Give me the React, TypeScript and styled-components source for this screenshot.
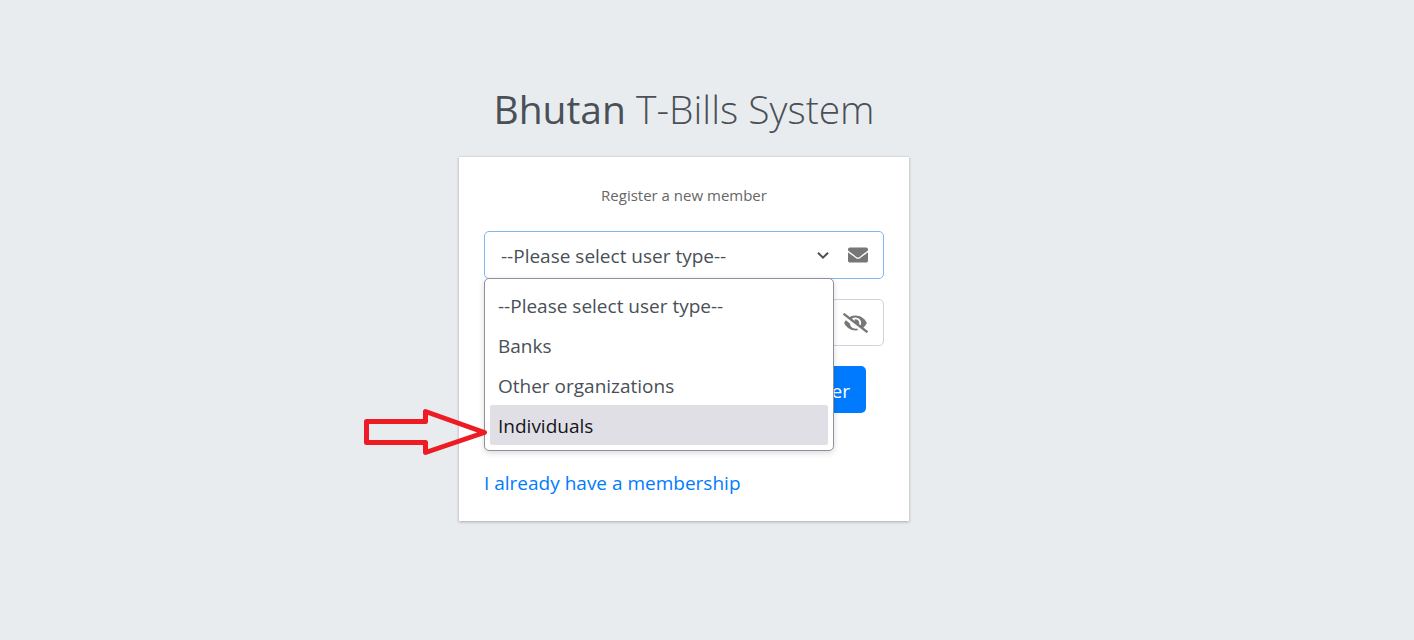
import React from "react";
import styled, { createGlobalStyle } from "styled-components";
import { FaEnvelope, FaEyeSlash } from "react-icons/fa";

const GlobalStyle = createGlobalStyle`
  *, *::before, *::after { box-sizing: border-box; }
  body {
    margin: 0;
    background: #e9ecef;
    color: #495057;
    font-family: "Open Sans", "Noto Sans", sans-serif;
    font-size: 19px;
    line-height: 30px;
  }
`;

const Page = styled.main`
  min-height: 100vh;
  padding: 77px 46px 40px 0;
  display: flex;
  flex-direction: column;
  align-items: center;
`;

const Title = styled.h1`
  margin: 0 0 17px;
  font-size: 39px;
  line-height: 63px;
  font-weight: 300;
  white-space: nowrap;

  b { font-weight: 500; }
`;

const Card = styled.section`
  width: 100%;
  max-width: 450px;
  padding: 25px 25px 23px;
  background: #fff;
  box-shadow: 0 0 1px rgba(0, 0, 0, 0.15), 0 1px 3px rgba(0, 0, 0, 0.25);
`;

const Intro = styled.p`
  margin: 0 0 22px;
  font-size: 15px;
  line-height: 27px;
  color: #666;
  text-align: center;
`;

const Field = styled.div<{ $focused?: boolean }>`
  position: relative;
  display: flex;
  align-items: center;
  height: ${(p) => (p.$focused ? 48 : 47)}px;
  margin-bottom: 20px;
  border: 1px solid ${(p) => (p.$focused ? "#80b8ee" : "#ced4da")};
  border-radius: 5px;
  background: #fff;
`;

const Select = styled.select`
  appearance: none;
  width: 100%;
  height: 100%;
  padding: 2px 16px 0;
  border: 0;
  outline: 0;
  background: transparent;
  color: inherit;
  font: inherit;
`;

const Input = styled.input`
  flex: 1;
  min-width: 0;
  height: 100%;
  padding: 0 16px;
  border: 0;
  outline: 0;
  background: transparent;
  font: inherit;
`;

const SelectBox = styled.div`
  position: relative;
  flex: 1;
  height: 100%;
`;

const Chevron = styled.svg`
  position: absolute;
  right: 5px;
  top: 19px;
  pointer-events: none;
`;

const Addon = styled.span`
  display: flex;
  padding: 0 15px 0 14px;
  color: #777;
`;

const Menu = styled.ul`
  position: absolute;
  z-index: 1;
  top: 46px;
  left: -1px;
  right: 49px;
  margin: 0;
  padding: 6px 5px 5px;
  list-style: none;
  background: #fff;
  border: 1px solid #8f8f9d;
  border-radius: 5px;
  box-shadow: 0 2px 6px rgba(0, 0, 0, 0.15);
`;

const Option = styled.li<{ $active?: boolean }>`
  position: relative;
  padding: 6px 8px 4px;
  border-radius: 2px;
  color: ${(p) => (p.$active ? "#15141a" : "inherit")};
  background: ${(p) => (p.$active ? "#e0dfe6" : "transparent")};
`;

const Arrow = styled.svg`
  position: absolute;
  top: 3px;
  left: -127px;
`;

const Actions = styled.div`
  display: flex;
  justify-content: flex-end;
  padding-right: 18px;
  margin-bottom: 55px;
`;

const Button = styled.button`
  height: 47px;
  padding: 2px 16px 0;
  border: 0;
  border-radius: 5px;
  background: #007bff;
  color: #fff;
  font: inherit;
`;

const Link = styled.a`
  display: block;
  color: #007bff;
  text-decoration: none;
`;

const EyeSlashIcon = styled(FaEyeSlash)`
  width: 25px;
  height: 20px;
`;

const userTypes = [
  "--Please select user type--",
  "Banks",
  "Other organizations",
  "Individuals",
];

export default function App() {
  return (
    <Page>
      <GlobalStyle />
      <Title>
        <b>Bhutan</b> T-Bills System
      </Title>
      <Card>
        <Intro>Register a new member</Intro>
        <Field $focused>
          <SelectBox>
            <Select aria-label="User type">
              {userTypes.map((type) => (
                <option key={type}>{type}</option>
              ))}
            </Select>
            <Chevron width="12" height="9" viewBox="0 0 12 9" fill="none">
              <path d="M1 1.700 6 6.700l5-5" stroke="#495057" strokeWidth="2" />
            </Chevron>
          </SelectBox>
          <Addon>
            <FaEnvelope size={20} />
          </Addon>
          <Menu role="listbox" aria-label="User types">
            {userTypes.map((type) => {
              const active = type === "Individuals";
              return (
                <Option key={type} role="option" aria-selected={active} $active={active}>
                  {type}
                  {active && (
                    <Arrow width="126" height="48" viewBox="0 0 126 48" aria-hidden="true">
                      <path
                        d="M3.5 13.5H62.5V3.5L121.5 24.5 62.5 44.5V34.5H3.5Z"
                        fill="none"
                        stroke="#ed1c24"
                        strokeWidth="5"
                        strokeLinejoin="round"
                      />
                    </Arrow>
                  )}
                </Option>
              );
            })}
          </Menu>
        </Field>
        <Field>
          <Input type="password" aria-label="Password" />
          <Addon>
            <EyeSlashIcon />
          </Addon>
        </Field>
        <Actions>
          <Button type="button">Register</Button>
        </Actions>
        <Link href="#login">I already have a membership</Link>
      </Card>
    </Page>
  );
}
